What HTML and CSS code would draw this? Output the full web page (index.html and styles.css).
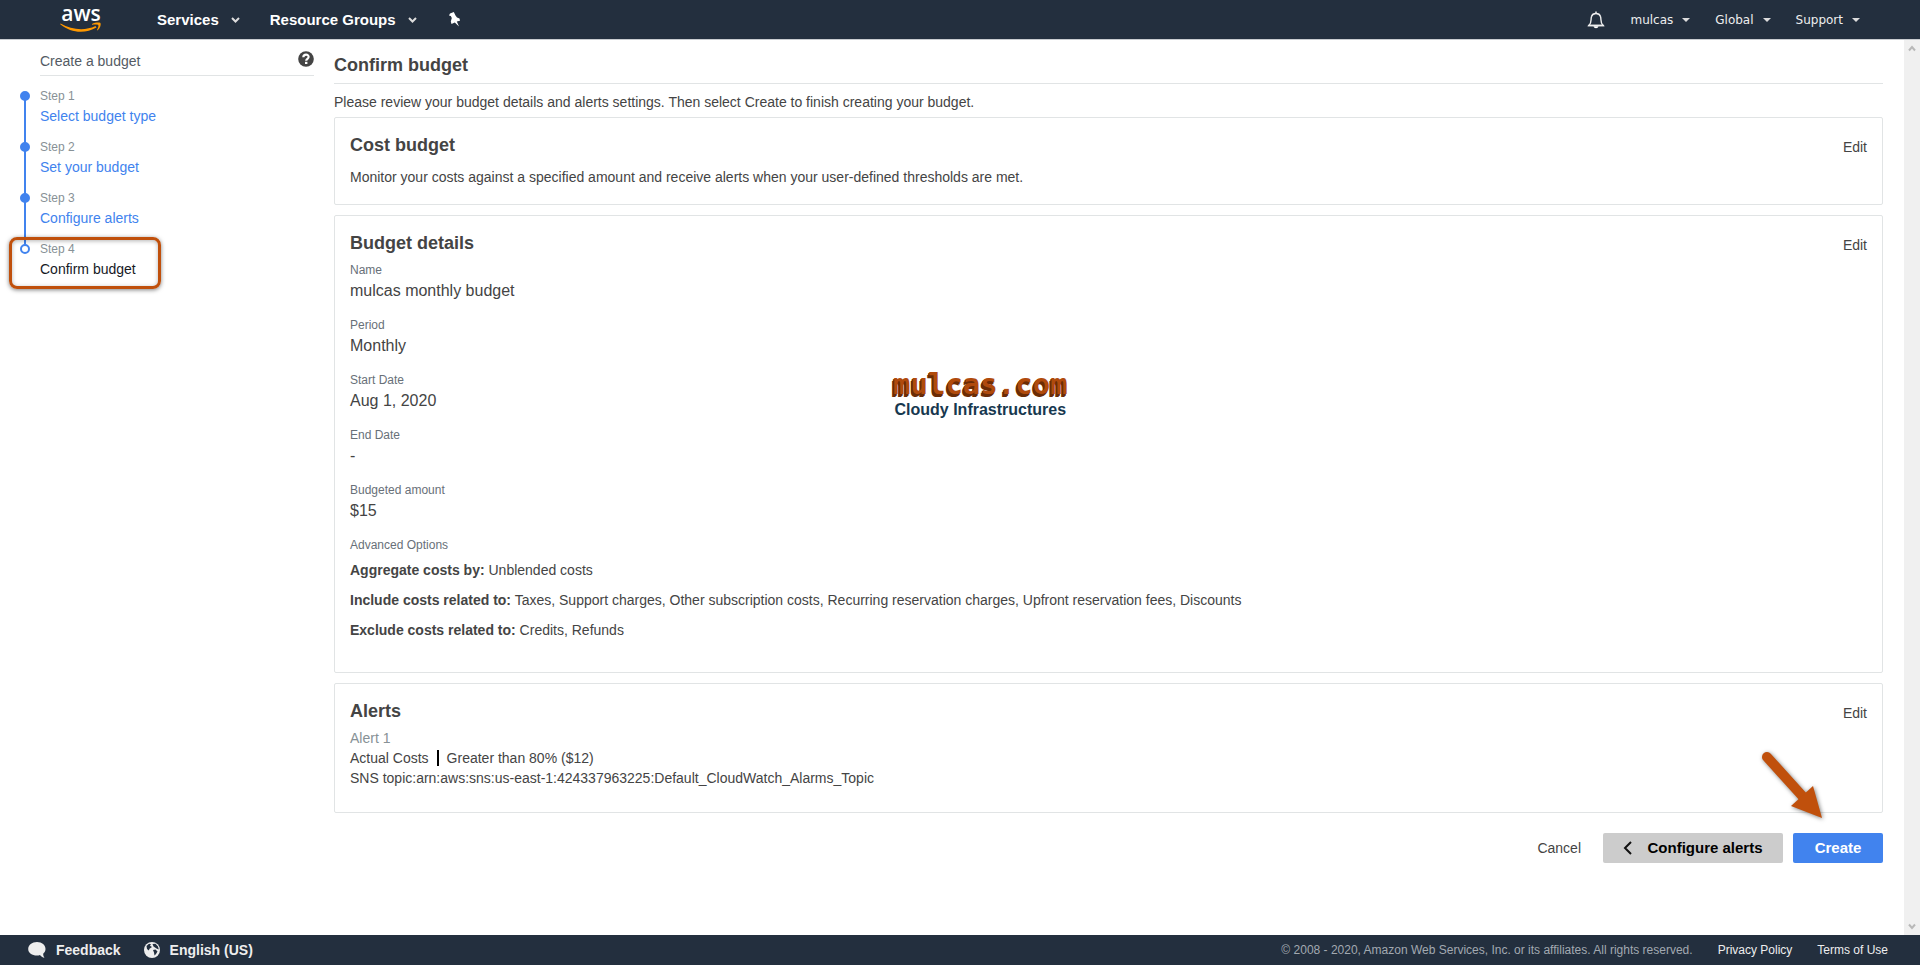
FILE: index.html
```html
<!DOCTYPE html>
<html lang="en">
<head>
    <meta charset="UTF-8">
    <title>Create a budget</title>
    <meta name="viewport" content="width=device-width, initial-scale=1.0">
    <link rel="stylesheet" href="styles.css">
</head>
<body>
    <header class="topbar">
        <a href="#" class="logo" aria-label="aws">
            <span class="logo-text">aws</span>
            <svg class="logo-smile" width="42" height="11" viewBox="0 0 42 11">
                <path d="M.5 1.500C12 8 25 9 35.500 4L36.500 5.500C25 12 11 11 .2 2.200z" fill="#f90"/>
                <path d="M32 2C35 .5 39 .2 40.500 1C41.200 3 40 6.500 37.500 8.500L37 8C38 6 38.800 4 38.300 3C37.500 2.200 35 2.300 32 2.700z" fill="#f90"/>
            </svg>
        </a>
        <nav class="nav-main">
            <button type="button">Services <svg width="9" height="6" viewBox="0 0 9 6"><path d="M1 1l3.500 3.500L8 1" fill="none" stroke="#ddd" stroke-width="2"/></svg></button>
            <button type="button">Resource Groups <svg width="9" height="6" viewBox="0 0 9 6"><path d="M1 1l3.500 3.500L8 1" fill="none" stroke="#ddd" stroke-width="2"/></svg></button>
            <button type="button" aria-label="Pin">
                <svg width="14" height="15" viewBox="0 0 14 15"><path d="M3 1.500L6.800 0L8.500 3.500L10 5.500L12.500 6.500L13 8.800L9.800 9.500L12 14.500L7.800 10.600L4.500 12L3.800 9.500L4.800 6L3.800 4L2 3.500z" fill="#fff"/></svg>
            </button>
        </nav>
        <nav class="nav-user">
            <button type="button" aria-label="Notifications">
                <svg width="18" height="18" viewBox="0 0 18 18">
                    <path d="M2 14.500C5 12 3.500 8.500 4.500 5.500C5.200 3.200 7 2.500 9 2.500S12.800 3.200 13.500 5.500C14.500 8.500 13 12 16 14.500z" fill="none" stroke="#eee" stroke-width="1.400"/>
                    <path d="M9 .6v2M1 14.500h16" stroke="#eee" stroke-width="1.500"/>
                    <path d="M6.500 15.200h5C11.200 17.800 6.800 17.800 6.500 15.200z" fill="#fff"/>
                </svg>
            </button>
            <button type="button">mulcas <span class="caret"></span></button>
            <button type="button">Global <span class="caret"></span></button>
            <button type="button">Support <span class="caret"></span></button>
        </nav>
    </header>

    <div class="page">
        <aside class="sidebar">
            <div class="sidebar-title">
                <span>Create a budget</span>
                <svg width="16" height="16" viewBox="0 0 16 16">
                    <circle cx="8" cy="8" r="7.800" fill="#444"/>
                    <path d="M5.300 6.200C5.500 2.700 10.800 3 10.600 6C10.500 7.800 8.300 7.800 8.200 9.700" fill="none" stroke="#fff" stroke-width="2.200"/>
                    <rect x="7" y="10.800" width="2.400" height="2.200" fill="#fff"/>
                </svg>
            </div>
            <ol class="steps">
                <li><span class="step-no">Step 1</span><a href="#">Select budget type</a></li>
                <li><span class="step-no">Step 2</span><a href="#">Set your budget</a></li>
                <li><span class="step-no">Step 3</span><a href="#">Configure alerts</a></li>
                <li class="current"><span class="step-no">Step 4</span><span class="step-name">Confirm budget</span><span class="callout"></span></li>
            </ol>
        </aside>

        <main class="content">
            <h1>Confirm budget</h1>
            <p class="intro">Please review your budget details and alerts settings. Then select Create to finish creating your budget.</p>

            <section class="card">
                <div class="card-head">
                    <h2>Cost budget</h2>
                    <button type="button" class="edit">Edit</button>
                </div>
                <p class="card-text">Monitor your costs against a specified amount and receive alerts when your user-defined thresholds are met.</p>
            </section>

            <section class="card card-details">
                <div class="card-head">
                    <h2>Budget details</h2>
                    <button type="button" class="edit">Edit</button>
                </div>
                <dl class="fields">
                    <dt>Name</dt>
                    <dd>mulcas monthly budget</dd>
                    <dt>Period</dt>
                    <dd>Monthly</dd>
                    <dt>Start Date</dt>
                    <dd>Aug 1, 2020</dd>
                    <dt>End Date</dt>
                    <dd>-</dd>
                    <dt>Budgeted amount</dt>
                    <dd>$15</dd>
                    <dt>Advanced Options</dt>
                </dl>
                <div class="options">
                    <p><b>Aggregate costs by:</b> Unblended costs</p>
                    <p><b>Include costs related to:</b> Taxes, Support charges, Other subscription costs, Recurring reservation charges, Upfront reservation fees, Discounts</p>
                    <p><b>Exclude costs related to:</b> Credits, Refunds</p>
                </div>
                <div class="watermark">
                    <div class="watermark-name">mulcas.com</div>
                    <div class="watermark-tag">Cloudy Infrastructures</div>
                </div>
            </section>

            <section class="card card-alerts">
                <div class="card-head">
                    <h2>Alerts</h2>
                    <button type="button" class="edit">Edit</button>
                </div>
                <p class="alert-no">Alert 1</p>
                <p class="alert-rule"><span>Actual Costs</span><span>Greater than 80% ($12)</span></p>
                <p>SNS topic:arn:aws:sns:us-east-1:424337963225:Default_CloudWatch_Alarms_Topic</p>
            </section>

            <div class="actions">
                <button type="button" class="btn btn-link">Cancel</button>
                <button type="button" class="btn btn-back">
                    <svg width="10" height="16" viewBox="0 0 10 16"><path d="M8 2L2 8l6 6" fill="none" stroke="#111" stroke-width="2"/></svg>
                    Configure alerts
                </button>
                <button type="button" class="btn btn-primary">Create</button>
                <svg class="arrow" width="76" height="80" viewBox="0 0 76 80">
                    <path d="M15 15L53 57" stroke="#c0500c" stroke-width="10" stroke-linecap="round"/>
                    <path d="M70 76L39 64L61 44z" fill="#c0500c"/>
                </svg>
            </div>
        </main>

        <div class="scrollbar">
            <svg width="8" height="7" viewBox="0 0 8 7"><path d="M1 5.500L4 2l3 3.500" fill="none" stroke="#b8b8b8" stroke-width="2"/></svg>
            <svg width="8" height="7" viewBox="0 0 8 7"><path d="M1 1.500L4 5l3-3.500" fill="none" stroke="#b8b8b8" stroke-width="2"/></svg>
        </div>
    </div>

    <footer class="footer">
        <button type="button">
            <svg width="18" height="16" viewBox="0 0 18 16"><path d="M9 0C4 0 .2 3 .2 7S4 13.500 9 13.500C10 13.500 11 13.400 12 13C13 14.500 14.500 15.500 16.500 15.800C15.500 14.500 15 13 15.300 11.500C16.800 10.300 17.500 8.700 17.500 7C17.500 3 14 0 9 0z" fill="#eee"/></svg>
            Feedback
        </button>
        <button type="button">
            <svg width="16" height="16" viewBox="0 0 16 16">
                <circle cx="8" cy="8" r="8" fill="#eee"/>
                <path d="M2.500 4L5 1.800L7 2.200L6 3.800L8 5L5.500 6.800L4.800 8.500L3 7zM8.500 2L11.500 1.800L14 4.500L14.800 7.500L12.500 6.500L11 5.500L9.500 4.500zM9 8L11.500 7.500L13.500 9.500L12 12L10.500 13.500L10 10.500z" fill="#232f3e"/>
            </svg>
            English (US)
        </button>
        <span class="copyright">© 2008 - 2020, Amazon Web Services, Inc. or its affiliates. All rights reserved.</span>
        <a href="#">Privacy Policy</a>
        <a href="#">Terms of Use</a>
    </footer>
</body>
</html>
```
FILE: styles.css
```css
*, *::before, *::after {
    box-sizing: border-box;
}
body {
    margin: 0;
    min-height: 100vh;
    display: flex;
    flex-direction: column;
    font-family: "Liberation Sans", Arial, sans-serif;
    font-size: 14px;
    line-height: 20px;
    color: #444;
    background: #fff;
}
h1, h2, p, dl, dd, ol {
    margin: 0;
    padding: 0;
}
button {
    font: inherit;
    color: inherit;
    background: none;
    border: 0;
    padding: 0;
    cursor: pointer;
}
a {
    text-decoration: none;
}

/* top bar */
.topbar {
    display: flex;
    align-items: center;
    height: 40px;
    padding: 0 60px;
    background: #232f3e;
    border-bottom: 1px solid #c8ccd0;
}
.logo {
    display: flex;
    flex-direction: column;
    width: 42px;
    margin-right: 55px;
    padding-bottom: 2px;
    color: #fff;
}
.logo-text {
    font-family: "Open Sans", "Noto Sans", sans-serif;
    font-size: 21px;
    font-weight: 600;
    line-height: 18px;
    text-align: center;
}
.nav-main, .nav-user {
    display: flex;
    align-items: center;
}
.nav-main {
    gap: 30px;
    font-size: 15px;
    font-weight: bold;
    color: #fff;
    text-shadow: 0 1px 1px #000;
}
.nav-main button, .nav-user button {
    display: flex;
    align-items: center;
    gap: 12px;
}
.nav-user {
    margin-left: auto;
    gap: 25px;
    font-family: "DejaVu Sans", Verdana, sans-serif;
    font-size: 12px;
    color: #eee;
    text-shadow: 0 1px 1px #000;
}
.nav-user button {
    gap: 9px;
}
.caret {
    border: 4px solid transparent;
    border-top-color: #ddd;
    border-bottom: 0;
}

/* page */
.page {
    flex: 1;
    display: flex;
}
.sidebar {
    width: 314px;
    padding: 11px 0 0 40px;
}
.sidebar-title {
    display: flex;
    justify-content: space-between;
    padding-bottom: 4px;
    border-bottom: 1px solid #e1e4e5;
    font-size: 14px;
    color: #545b64;
}
.steps {
    margin-top: 10px;
    list-style: none;
}
.steps li {
    position: relative;
    display: flex;
    flex-direction: column;
    height: 51px;
}
/* dot and connecting line */
.steps li::before {
    content: "";
    position: absolute;
    z-index: 1;
    left: -20px;
    top: 5px;
    width: 10px;
    height: 10px;
    border: 2px solid #4183ee;
    border-radius: 50%;
    background: #4183ee;
}
.steps li::after {
    content: "";
    position: absolute;
    left: -16px;
    top: 10px;
    width: 2px;
    height: 51px;
    background: #4183ee;
}
.steps .current::before {
    background: #fff;
}
.steps .current::after {
    display: none;
}
.step-no {
    font-size: 12px;
    color: #879196;
}
.steps a {
    color: #4183ee;
}
.step-name {
    color: #16191f;
}
.callout {
    position: absolute;
    left: -31px;
    top: -2px;
    width: 152px;
    height: 52px;
    border: 3px solid #c0500c;
    border-radius: 8px;
    box-shadow: 0 1px 4px rgba(0, 0, 0, .5), inset 0 1px 4px rgba(0, 0, 0, .3);
}

/* content */
.content {
    flex: 1;
    padding: 13px 21px 0 20px;
}
h1 {
    padding-bottom: 6px;
    border-bottom: 1px solid #e1e4e5;
    font-size: 18px;
    line-height: 24px;
}
.intro {
    padding: 8px 0 5px;
}
.card {
    position: relative;
    margin-bottom: 10px;
    padding: 15px 15px 17px;
    border: 1px solid #e1e4e5;
    border-radius: 2px;
}
.card-head {
    display: flex;
    justify-content: space-between;
    align-items: flex-end;
}
h2 {
    font-size: 18px;
    line-height: 24px;
}
.card-text {
    margin-top: 10px;
}
.card-details {
    padding-bottom: 32px;
}
.fields {
    margin-top: 5px;
}
.fields dt {
    font-size: 12px;
    color: #687078;
}
.fields dd {
    margin-bottom: 13px;
    font-size: 16px;
    line-height: 22px;
}
.options {
    display: flex;
    flex-direction: column;
    gap: 10px;
    margin-top: 5px;
}
.card-alerts {
    padding-bottom: 24px;
}
.alert-no {
    margin-top: 5px;
    color: #879196;
}
.alert-rule span + span {
    margin-left: 8px;
    padding-left: 8px;
    border-left: 2px solid #000;
}

/* watermark */
.watermark {
    position: absolute;
    left: 558px;
    top: 152px;
    font-weight: bold;
    text-align: center;
}
.watermark-name {
    font-family: "DejaVu Sans Mono", monospace;
    font-size: 29px;
    line-height: 32px;
    color: #b04a0c;
    text-shadow: -1px 1px #6b2c06, -1px 2px #6b2c06, -2px 3px #6b2c06;
}
.watermark-tag {
    font-size: 16px;
    color: #17384f;
}

/* actions */
.actions {
    position: relative;
    display: flex;
    justify-content: flex-end;
    gap: 10px;
    margin-top: 20px;
}
.btn {
    display: flex;
    align-items: center;
    justify-content: center;
    gap: 14px;
    height: 30px;
    padding: 0 20px;
    border-radius: 2px;
    font-size: 15px;
    font-weight: bold;
}
.btn-link {
    padding: 0 12px;
    font-size: 14px;
    font-weight: normal;
}
.btn-back {
    width: 180px;
    background: #ccc;
    color: #000;
}
.btn-primary {
    width: 90px;
    background: #4183ee;
    color: #fff;
}
.arrow {
    position: absolute;
    right: 55px;
    bottom: 41px;
    filter: drop-shadow(1px 1px 2px rgba(0, 0, 0, .5));
}

.scrollbar {
    display: flex;
    flex-direction: column;
    justify-content: space-between;
    align-items: center;
    width: 16px;
    padding: 5px 0;
    background: #f0f0f0;
}

/* footer */
.footer {
    display: flex;
    align-items: center;
    height: 30px;
    padding: 0 32px 0 28px;
    background: #232f3e;
    color: #eee;
    font-size: 12px;
}
.footer button {
    display: flex;
    align-items: center;
    gap: 10px;
    margin-right: 23px;
    font-size: 14px;
    font-weight: bold;
}
.copyright {
    margin-left: auto;
    color: #a2a9b1;
}
.footer a {
    margin-left: 25px;
    color: #eee;
}
```
